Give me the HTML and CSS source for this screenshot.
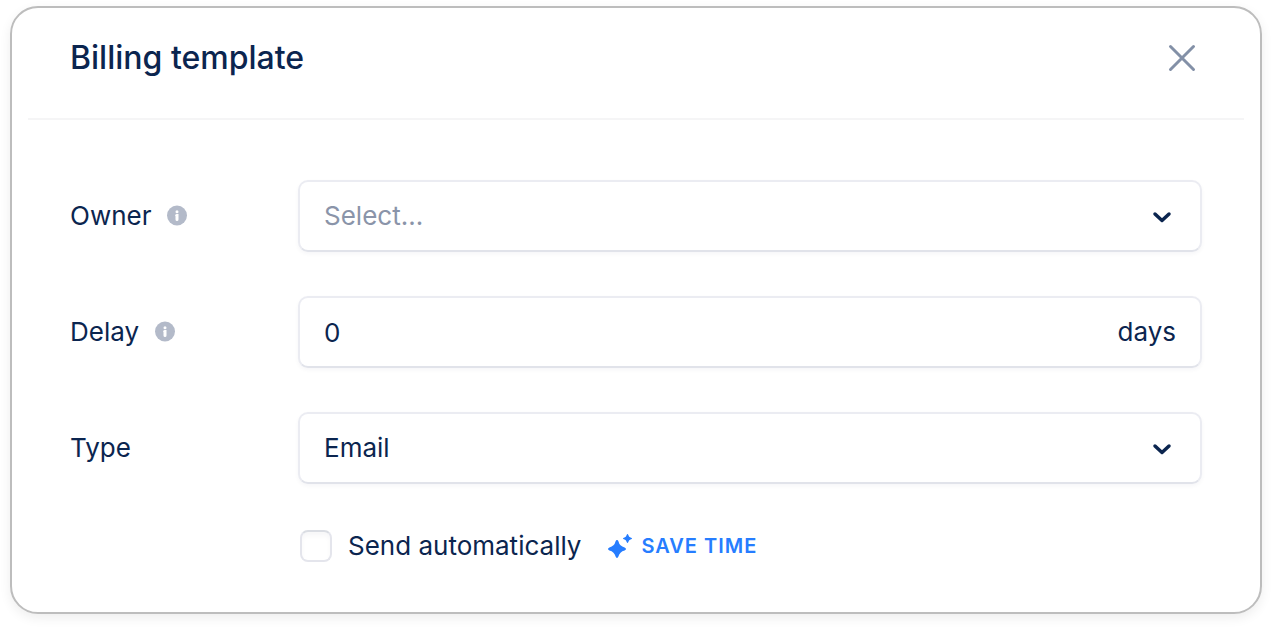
FILE: index.html
```html
<!DOCTYPE html>
<html lang="en">
<head>
    <meta charset="UTF-8">
    <meta name="viewport" content="width=device-width, initial-scale=1.0">
    <title>Billing template</title>
    <link rel="stylesheet" href="styles.css">
</head>
<body>
<main class="dialog">
    <header class="dialog-header">
        <h1>Billing template</h1>
        <button type="button" class="close-button" aria-label="Close">
            <svg width="28" height="28" viewBox="0 0 28 28"><path d="M2.5 2.5L25.5 25.5M25.5 2.5L2.5 25.5"/></svg>
        </button>
    </header>
    <form class="dialog-form">
        <div class="form-row">
            <div class="form-label">
                <label for="owner">Owner</label>
                <svg class="info-icon" width="20" height="20" viewBox="0 0 20 20">
                    <circle cx="10" cy="9.5" r="10"/>
                    <path d="M10 5.7V5.8M9.6 9.4H10V13.4"/>
                </svg>
            </div>
            <div class="field">
                <select id="owner" class="placeholder">
                    <option value="">Select...</option>
                </select>
                <svg class="chevron" width="20" height="12" viewBox="0 0 20 12"><path d="M3 3L10 9.5L17 3"/></svg>
            </div>
        </div>
        <div class="form-row">
            <div class="form-label">
                <label for="delay">Delay</label>
                <svg class="info-icon" width="20" height="20" viewBox="0 0 20 20">
                    <circle cx="10" cy="9.5" r="10"/>
                    <path d="M10 5.7V5.8M9.6 9.4H10V13.4"/>
                </svg>
            </div>
            <div class="field">
                <input type="text" id="delay" value="0" inputmode="numeric">
                <span class="unit">days</span>
            </div>
        </div>
        <div class="form-row">
            <div class="form-label">
                <label for="type">Type</label>
            </div>
            <div class="field">
                <select id="type">
                    <option>Email</option>
                </select>
                <svg class="chevron" width="20" height="12" viewBox="0 0 20 12"><path d="M3 3L10 9.5L17 3"/></svg>
            </div>
        </div>
        <div class="form-row">
            <div class="checkbox-row">
                <input type="checkbox" id="sendAuto">
                <label for="sendAuto">Send automatically</label>
                <span class="save-time">
                    <svg width="26" height="26" viewBox="0 0 26 26">
                        <path d="M10 7Q11 7 11.4 8.3Q12.6 13.3 17.6 14.5Q19 15 19 16Q19 17 17.6 17.4Q12.6 18.6 11.4 23.6Q11 25 10 25Q9 25 8.6 23.6Q7.4 18.6 2.4 17.4Q1 17 1 16Q1 15 2.4 14.5Q7.4 13.3 8.6 8.3Q9 7 10 7Z"/>
                        <path d="M20.5 1Q21 1 21.3 2Q21.8 4.2 24 4.7Q25 5 25 5.5Q25 6 24 6.3Q21.8 6.8 21.3 9Q21 10 20.5 10Q20 10 19.7 9Q19.2 6.8 17 6.3Q16 6 16 5.5Q16 5 17 4.7Q19.2 4.2 19.7 2Q20 1 20.5 1Z"/>
                    </svg>
                    SAVE TIME
                </span>
            </div>
        </div>
    </form>
</main>
</body>
</html>
```
FILE: styles.css
```css
* {
    box-sizing: border-box;
}
body {
    margin: 0;
    padding: 6px 10px 14px;
    background: #fff;
    color: #0b254f;
    font-family: Inter, "Liberation Sans", sans-serif;
    font-size: 26px;
    line-height: 32px;
}
.dialog {
    padding: 0 16px;
    border: 2px solid #bdbdbd;
    border-radius: 28px;
    box-shadow: 0 4px 12px rgba(0, 0, 0, 0.07);
}
.dialog-header {
    display: flex;
    align-items: center;
    justify-content: space-between;
    padding: 30px 42px 40px;
    border-bottom: 2px solid #f5f5f6;
}
h1 {
    margin: 0;
    font-size: 32px;
    font-weight: 500;
    line-height: 40px;
}
.close-button {
    display: flex;
    padding: 6px;
    border: 0;
    background: none;
    cursor: pointer;
}
.close-button svg {
    fill: none;
    stroke: #8390a7;
    stroke-width: 3;
    stroke-linecap: round;
}
.dialog-form {
    display: flex;
    flex-direction: column;
    gap: 44px;
    padding: 60px 42px 48px;
}
.form-row {
    display: grid;
    grid-template-columns: 228px 1fr;
    align-items: center;
}
.form-label {
    display: flex;
    align-items: center;
    gap: 16px;
}
.info-icon {
    overflow: visible;
    fill: #b3bac9;
}
.info-icon path {
    fill: none;
    stroke: #fff;
    stroke-width: 3;
    stroke-linecap: round;
}
.field {
    position: relative;
}
.field select,
.field input {
    display: block;
    width: 100%;
    height: 72px;
    padding: 0 24px;
    border: 2px solid #ebecf2;
    border-bottom-color: #e1e3ea;
    border-radius: 10px;
    background: #fff;
    box-shadow: 0 2px 4px rgba(11, 37, 79, 0.04);
    color: inherit;
    font: inherit;
    appearance: none;
}
.field select.placeholder {
    color: #8a94a9;
}
.chevron {
    position: absolute;
    top: 31px;
    right: 30px;
    fill: none;
    stroke: #0b254f;
    stroke-width: 3.5;
    stroke-linecap: round;
    stroke-linejoin: round;
    pointer-events: none;
}
.unit {
    position: absolute;
    top: 20px;
    right: 26px;
}
.checkbox-row {
    display: flex;
    grid-column: 2;
    align-items: center;
    padding: 2px 0 2px 2px;
}
.checkbox-row input {
    width: 32px;
    height: 32px;
    margin: 0 16px 0 0;
    border: 2px solid #e4e5ec;
    border-top-color: #dadde3;
    border-radius: 8px;
    background: #fff;
    box-shadow: inset 0 4px 4px rgba(11, 37, 79, 0.03);
    appearance: none;
}
.save-time {
    display: flex;
    align-items: center;
    gap: 8px;
    margin-left: 26px;
    color: #267dff;
    font-size: 20px;
    font-weight: 600;
    letter-spacing: 1px;
}
.save-time svg {
    fill: #267dff;
}
@media (max-width: 700px) {
    .form-row {
        grid-template-columns: 1fr;
        gap: 12px;
    }
    .checkbox-row {
        grid-column: 1;
        flex-wrap: wrap;
    }
}
```
